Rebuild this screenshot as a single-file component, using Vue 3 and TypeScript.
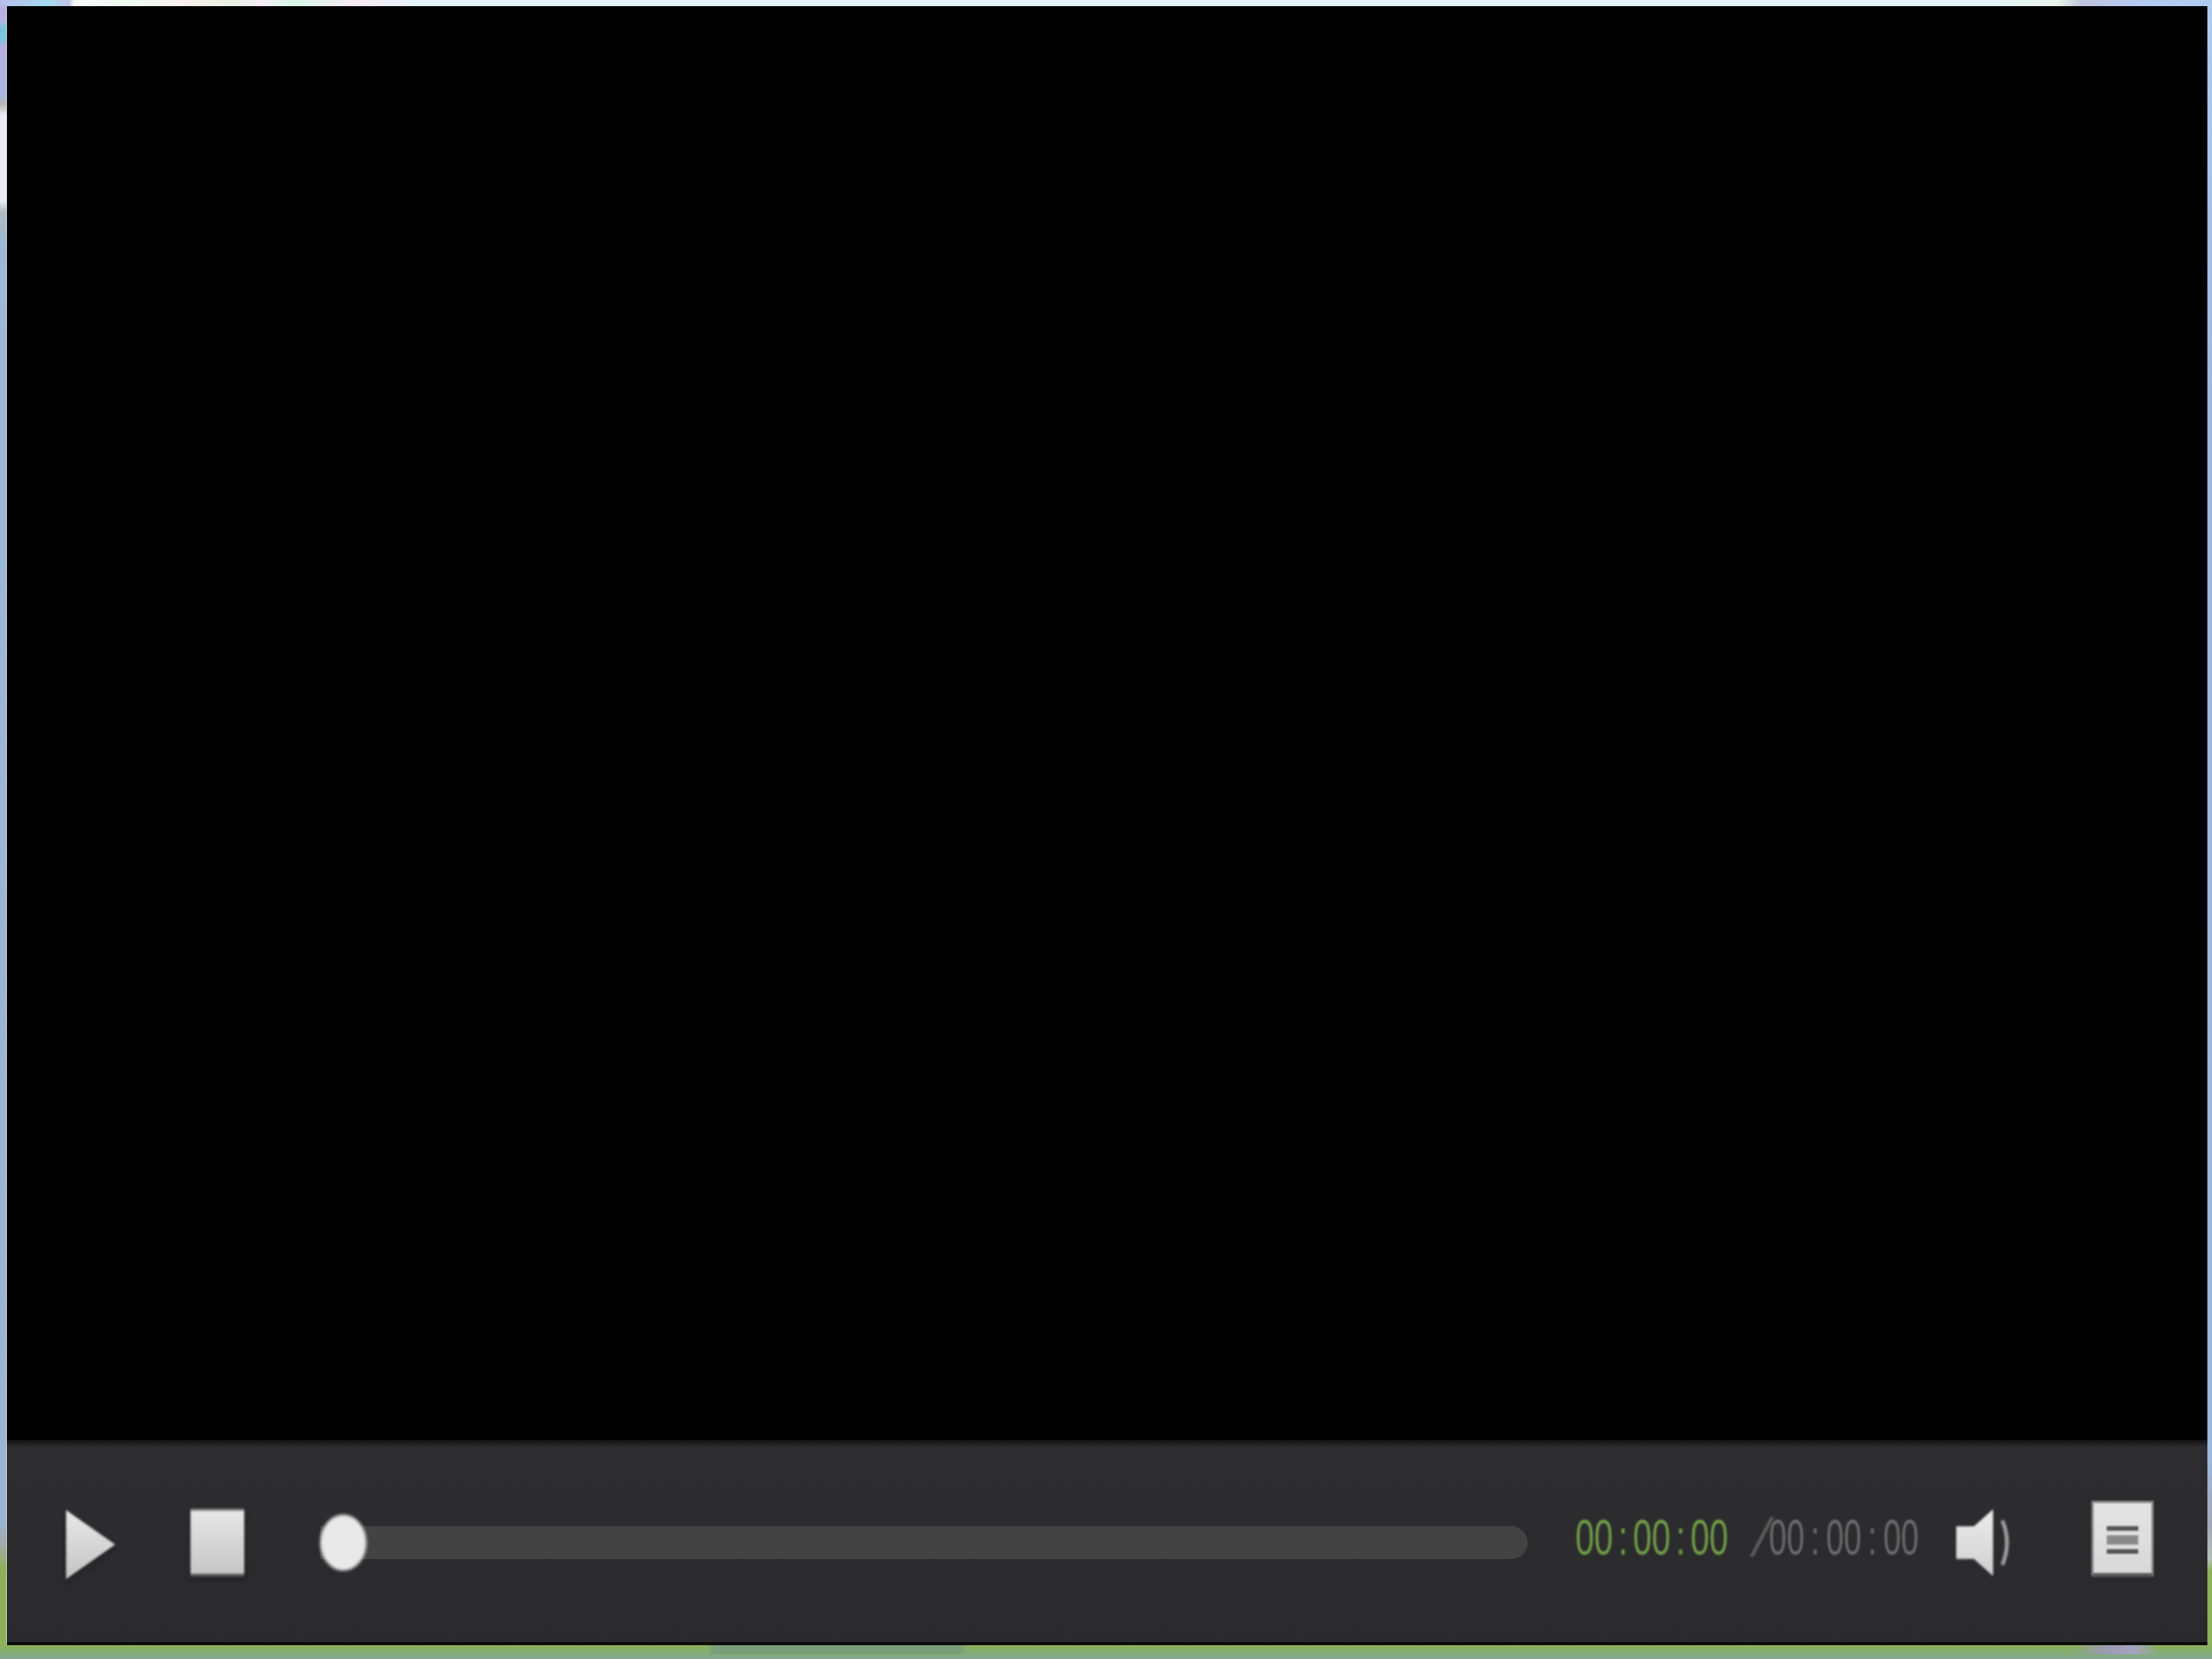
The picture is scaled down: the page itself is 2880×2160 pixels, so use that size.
<script setup lang="ts">
// total and elapsed are both empty until a file is loaded
const elapsed = ['00', '00', '00']
const total = ['00', '00', '00']
</script>

<template>
  <div class="desktop">
    <div class="player">
      <div class="video"></div>
      <div class="controls">
        <svg class="play" width="66" height="92" viewBox="0 0 66 92">
          <defs>
            <linearGradient id="btn" x1="0" y1="0" x2="0" y2="1">
              <stop offset="0" stop-color="#e8e8e8" />
              <stop offset="1" stop-color="#c4c4c4" />
            </linearGradient>
          </defs>
          <path d="M1 1 L65 46 L1 91 Z" fill="url(#btn)" />
        </svg>
        <div class="stop"></div>
        <div class="seek">
          <div class="thumb"></div>
        </div>
        <div class="time current">
          <span class="digits">
            <template v-for="(part, i) in elapsed" :key="i">
              <b>{{ part }}</b><i v-if="i < 2">:</i>
            </template>
          </span>
        </div>
        <div class="time duration">
          <span class="slash">/</span>
          <span class="digits">
            <template v-for="(part, i) in total" :key="i">
              <b>{{ part }}</b><i v-if="i < 2">:</i>
            </template>
          </span>
        </div>
        <svg class="speaker" width="76" height="87" viewBox="0 0 76 90" preserveAspectRatio="none">
          <defs>
            <linearGradient id="spk" x1="0" y1="0" x2="0" y2="1">
              <stop offset="0" stop-color="#ececec" />
              <stop offset="1" stop-color="#cfcfcf" />
            </linearGradient>
          </defs>
          <path d="M0 23 H23 L48 0 V90 L23 67 H0 Z" fill="url(#spk)" />
          <path d="M60 15 Q72 45 60 75" fill="none" stroke="#a0a0a0" stroke-width="5" />
        </svg>
        <div class="playlist">
          <span class="line"></span>
          <span class="line thick"></span>
          <span class="line"></span>
        </div>
      </div>
    </div>
  </div>
</template>

<style scoped>
.desktop {
  width: 2880px;
  height: 2160px;
  box-sizing: border-box;
  padding: 8px 6px 18px 9px;
  background:
    linear-gradient(90deg, #b9bdea 0, #a5dcf2 60px, #c0c4e4 90px, #f6fafb 96px, #eefbf0 180px, #fdf0ec 240px, #e8f0e4 300px, #f8eef6 340px, #d8f8e8 380px, #f8e8f6 470px, #e4f4f8 540px, #e4f4f8 2600px, #e8f4e8 2680px, #c0c4dc 2710px, #b4ccf4 2790px, #aeccee 2880px) top / 100% 8px no-repeat,
    linear-gradient(90deg, transparent 920px, #7a9f78 930px, #7a9f78 1250px, transparent 1260px, transparent 2700px, #9a9ab0 2740px, #a4a4c0 2780px, transparent 2810px) left 0 bottom 6px / 100% 12px no-repeat,
    linear-gradient(180deg, #8cb058 0, #86ae70 8px, #82a890 100%) bottom / 100% 18px no-repeat,
    linear-gradient(180deg, #b8b0e2 0, #b8b0e2 28px, #7cc4dc 36px, #7cc4dc 50px, #b4b0e2 62px, #a8b8e0 125px, #b4b4b4 135px, #e8ecf0 150px, #e8ecf0 262px, #b0bcc4 275px, #a8b8c8 295px, #9cb8d8 320px, #98b4d0 1980px, #a4aaa8 2010px, #8cb058 2045px, #8cb058 100%) left top / 9px 100% no-repeat,
    linear-gradient(180deg, #aeccee 0, #a0b8e0 500px, #9cb8dc 1900px, #a4a8b8 1985px, #b4c0b8 2030px, #8cb058 2045px, #8cb058 100%);
}

.player {
  height: 100%;
  display: flex;
  flex-direction: column;
  background: #000;
  box-shadow: -1px 0 0 rgba(255, 255, 255, 0.5);
}

.video {
  flex: 1;
  background: #000;
}

.controls {
  height: 267px;
  box-sizing: border-box;
  padding: 0 0 9px 76px;
  display: flex;
  align-items: center;
  background: linear-gradient(180deg, #121212 0, #2d2d2f 9px, #2a2a2d 100%);
  border-bottom: 4px solid #0c0c0c;
}

.play {
  flex: none;
  filter: blur(1.5px) drop-shadow(0 3px 3px rgba(0, 0, 0, 0.35));
  margin-top: 18px;
}

.stop {
  flex: none;
  box-sizing: border-box;
  width: 70px;
  height: 89px;
  margin: 13px 0 0 97px;
  background: linear-gradient(180deg, #e6e6e6, #c6c6c6);
  border-top: 3px solid #777;
  border-bottom: 4px solid #555;
  filter: blur(1.5px) drop-shadow(0 3px 3px rgba(0, 0, 0, 0.35));
}

.seek {
  flex: none;
  position: relative;
  width: 1572px;
  height: 43px;
  margin: 12px 0 0 99px;
  border-radius: 0 22px 22px 0;
  background: #434343;
}

.thumb {
  position: absolute;
  left: 0;
  top: -15px;
  width: 60px;
  height: 73px;
  border-radius: 50%;
  background: #e9e9e9;
  filter: blur(2px);
}

.time {
  flex: none;
  display: flex;
  height: 60px;
  font-family: "Liberation Sans", sans-serif;
  font-size: 65px;
  line-height: 60px;
  filter: blur(1px);
}

.current {
  width: 199px;
  margin-left: 62px;
  color: #6f9a45;
}

.duration {
  width: 226px;
  margin-left: 24px;
  color: #6a6a6a;
}

.slash {
  display: block;
  flex: none;
  width: 29px;
  font-size: 70px;
  font-weight: 400;
  color: #5a5a5a;
  transform: translateX(10px) skewX(-14deg);
  transform-origin: left center;
}

.digits {
  display: inline-flex;
  white-space: nowrap;
  transform: scaleX(0.68);
  transform-origin: left center;
}

.duration .digits {
  transform: scaleX(0.64);
}

.digits b {
  font-weight: 400;
}

.digits i {
  font-style: normal;
  width: 38px;
  text-align: center;
}

.duration .digits i {
  width: 44px;
}

.speaker {
  flex: none;
  margin: 12px 0 0 47px;
  filter: blur(1.5px);
}

.playlist {
  flex: none;
  box-sizing: border-box;
  width: 81px;
  height: 99px;
  margin: 2px 0 0 100px;
  padding: 30px 17px 0;
  display: flex;
  flex-direction: column;
  gap: 6px;
  background: linear-gradient(180deg, #e4e4e4, #d8d8d8);
  border: 3px solid #8a8a8a;
  border-bottom: 5px solid #5a5a5a;
  filter: blur(1.2px);
}

.line {
  height: 6px;
  background: #555;
}

.line.thick {
  height: 12px;
  background: #8a8a8a;
}
</style>
